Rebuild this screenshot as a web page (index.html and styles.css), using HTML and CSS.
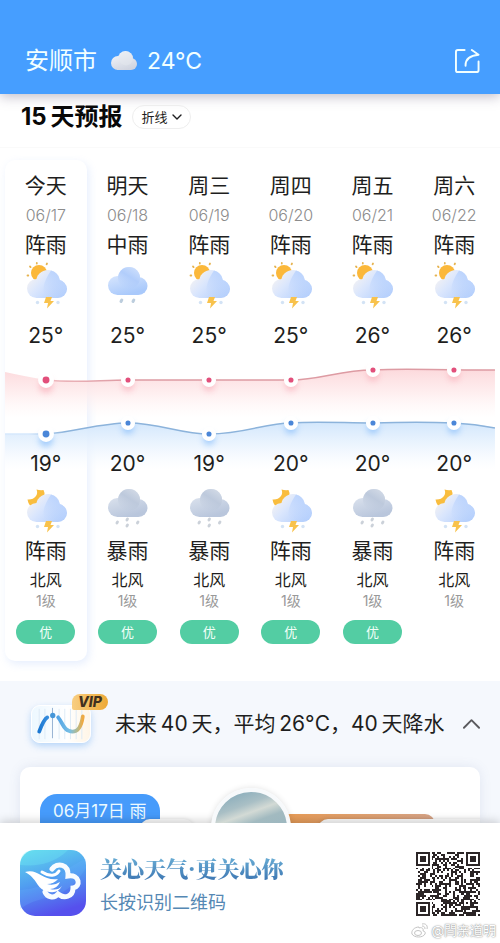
FILE: index.html
```html
<!DOCTYPE html>
<html lang="zh-CN">
<head>
<meta charset="utf-8">
<meta name="viewport" content="width=device-width, initial-scale=1">
<title>安顺市 15天预报</title>
<link rel="stylesheet" href="styles.css">
</head>
<body>
<svg class="defs" aria-hidden="true">
  <defs>
    <linearGradient id="gCloud" gradientUnits="userSpaceOnUse" x1="6" y1="12" x2="34" y2="38"><stop offset="0" stop-color="#f6f3f2"/><stop offset=".4" stop-color="#dae6fd"/><stop offset="1" stop-color="#b3cefc"/></linearGradient>
    <linearGradient id="gLobe" gradientUnits="userSpaceOnUse" x1="38" y1="14" x2="24" y2="36"><stop offset="0" stop-color="#bcd4fd"/><stop offset="1" stop-color="#bcd4fd" stop-opacity="0"/></linearGradient>
    <linearGradient id="gRain" gradientUnits="userSpaceOnUse" x1="10" y1="6" x2="18" y2="34"><stop offset="0" stop-color="#e3edfe"/><stop offset="1" stop-color="#a9c9fb"/></linearGradient>
    <linearGradient id="gRainHump" gradientUnits="userSpaceOnUse" x1="32" y1="4" x2="18" y2="26"><stop offset="0" stop-color="#d2e2fc"/><stop offset=".5" stop-color="#b1cdfb"/><stop offset="1" stop-color="#b1cdfb" stop-opacity="0"/></linearGradient>
    <linearGradient id="gGrey" gradientUnits="userSpaceOnUse" x1="10" y1="4" x2="18" y2="32"><stop offset="0" stop-color="#e2e8f1"/><stop offset="1" stop-color="#b9c6dc"/></linearGradient>
    <linearGradient id="gGreyHump" gradientUnits="userSpaceOnUse" x1="32" y1="2" x2="18" y2="24"><stop offset="0" stop-color="#d6dde8"/><stop offset=".5" stop-color="#bdc9dc"/><stop offset="1" stop-color="#bdc9dc" stop-opacity="0"/></linearGradient>
    <linearGradient id="gRed" x1="0" y1="0" x2="0" y2="1"><stop offset="0" stop-color="#fcd9dc"/><stop offset=".5" stop-color="#feebec" stop-opacity=".8"/><stop offset="1" stop-color="#fff5f5" stop-opacity="0"/></linearGradient>
    <linearGradient id="gBlue" x1="0" y1="0" x2="0" y2="1"><stop offset="0" stop-color="#d3e7fc"/><stop offset=".5" stop-color="#e9f3fe" stop-opacity=".8"/><stop offset="1" stop-color="#f4f9ff" stop-opacity="0"/></linearGradient>
    <linearGradient id="gRedLine" gradientUnits="userSpaceOnUse" x1="0" y1="0" x2="120" y2="0"><stop offset=".3" stop-color="#f0bcc1"/><stop offset="1" stop-color="#dd9ba3"/></linearGradient>
    <linearGradient id="gBlueLine" gradientUnits="userSpaceOnUse" x1="0" y1="0" x2="60" y2="0"><stop offset=".4" stop-color="#d6e8fc"/><stop offset="1" stop-color="#8cb3db"/></linearGradient>
    <filter id="soft" x="-50%" y="-50%" width="200%" height="200%"><feGaussianBlur stdDeviation="3"/></filter>
  </defs>
  <symbol id="thunder" viewBox="0 0 44 48">
    <g fill="url(#gCloud)"><circle cx="12.500" cy="26.500" r="9.500"/><circle cx="24" cy="20" r="12"/><circle cx="34" cy="27" r="9"/><rect x="12" y="22" width="22" height="14"/></g>
    <path d="M27 8.400A12 12 0 0 1 35.500 17.800A9.300 9.300 0 0 1 34 36H22Q15 26 27 8.400Z" fill="url(#gLobe)"/>
    <path d="M22 35h6l-1.500 4h3.500L23 46.500l1-5.500h-4Z" fill="#f8c24c"/>
    <circle cx="13.500" cy="40.500" r="1.700" fill="#d3e3f5"/><circle cx="34" cy="40.500" r="1.700" fill="#d3e3f5"/>
  </symbol>
  <symbol id="day" viewBox="0 0 44 48">
    <circle cx="15" cy="11" r="8" fill="#fbb83a"/>
    <path d="M6 4.500l.6.600M12.800 1v.5M23 1.500l-.4.800M3.500 13.500h.8" stroke="#e6b451" stroke-width="1.800" stroke-linecap="round"/>
    <use href="#thunder"/>
  </symbol>
  <symbol id="night" viewBox="0 0 44 48">
    <path d="M12.500 3.500Q16 4.500 19.500 4Q22 9 18 14Q13 20 6 19.500Q4 17 3.500 13.500Q9 14 12 10Q14 7 12.500 3.500Z" fill="#f9bd3e"/>
    <use href="#thunder"/>
  </symbol>
  <symbol id="rain" viewBox="0 0 44 48">
    <g fill="url(#gRain)"><circle cx="12.500" cy="23.500" r="9.500"/><circle cx="24" cy="16" r="11"/><circle cx="33.500" cy="24" r="9"/><rect x="12" y="20" width="21" height="13"/></g>
    <circle cx="24" cy="16" r="11" fill="url(#gRainHump)"/>
    <path d="M16.800 38l-.8 1.500M28.800 38l-.8 1.500" stroke="#bccddd" stroke-width="3" stroke-linecap="round"/>
  </symbol>
  <symbol id="storm" viewBox="0 0 44 48">
    <g fill="url(#gGrey)"><circle cx="12.500" cy="21.500" r="9.500"/><circle cx="24" cy="14" r="11"/><circle cx="33.500" cy="22" r="9"/><rect x="12" y="18" width="21" height="13"/></g>
    <circle cx="24" cy="14" r="11" fill="url(#gGreyHump)"/>
    <path d="M12.500 36l-.6 1M22.500 33l-.6 1M22.500 39l-.6 1M33 36l-.6 1" stroke="#cbd1d9" stroke-width="2.800" stroke-linecap="round"/>
  </symbol>
</svg>

<header class="topbar">
  <h1 class="city">安顺市</h1>
  <svg class="now-icon" viewBox="0 0 28 22" aria-hidden="true">
    <defs><linearGradient id="nowCloud" gradientUnits="userSpaceOnUse" x1="8" y1="2" x2="14" y2="21"><stop offset="0" stop-color="#f3f5fa"/><stop offset="1" stop-color="#cfd4e0"/></linearGradient></defs>
    <g fill="url(#nowCloud)"><circle cx="15.500" cy="8.500" r="7.500"/><circle cx="21" cy="14" r="6"/><rect x="7" y="10" width="14" height="10"/><circle cx="8" cy="13" r="7"/></g>
    <circle cx="16" cy="8.500" r="7" fill="#e4e7ee" opacity=".5"/>
  </svg>
  <span class="now">24°C</span>
  <button class="share" type="button" aria-label="分享">
    <svg viewBox="0 0 26 26" fill="none" stroke="currentColor" stroke-width="2" stroke-linecap="round" stroke-linejoin="round" aria-hidden="true">
      <path d="M10 1H3Q1 1 1 3V22Q1 24 3 24H22Q24.500 24 24.500 22V13"/><path d="M11 17.500Q10.500 7.500 24.500 6L17.500 1"/>
    </svg>
  </button>
</header>

<main>
  <div class="heading">
    <h2>15&#8201;天预报</h2>
    <button class="mode" type="button">折线
      <svg viewBox="0 0 10 6" fill="none" stroke="currentColor" stroke-width="1.400" stroke-linecap="round" stroke-linejoin="round" aria-hidden="true"><path d="M1 1l4 4 4-4"/></svg>
    </button>
  </div>

  <section class="forecast">
    <div class="today"></div>
    <div class="cell"><span class="day">今天</span><span class="date">06/17</span><span class="cond">阵雨</span><svg class="icon"><use href="#day"/></svg><span class="temp">25°</span></div>
    <div class="cell"><span class="day">明天</span><span class="date">06/18</span><span class="cond">中雨</span><svg class="icon"><use href="#rain"/></svg><span class="temp">25°</span></div>
    <div class="cell"><span class="day">周三</span><span class="date">06/19</span><span class="cond">阵雨</span><svg class="icon"><use href="#day"/></svg><span class="temp">25°</span></div>
    <div class="cell"><span class="day">周四</span><span class="date">06/20</span><span class="cond">阵雨</span><svg class="icon"><use href="#day"/></svg><span class="temp">25°</span></div>
    <div class="cell"><span class="day">周五</span><span class="date">06/21</span><span class="cond">阵雨</span><svg class="icon"><use href="#day"/></svg><span class="temp">26°</span></div>
    <div class="cell"><span class="day">周六</span><span class="date">06/22</span><span class="cond">阵雨</span><svg class="icon"><use href="#day"/></svg><span class="temp">26°</span></div>

    <svg class="chart" viewBox="0 0 490 100" aria-hidden="true">
      <path d="M0 22Q18 26 41 30C70 32 95 30 123 30H286C315 30 335 20 368 20C400 18 420 20 490 20V68H0Z" fill="url(#gRed)"/>
      <path d="M0 84H41C70 82 95 73 123 73C155 73 175 84 204 84C240 84 260 73 286 73H449Q470 73 490 78V120H0Z" fill="url(#gBlue)"/>
      <path d="M41 30C70 33 95 30 123 30H286C315 30 335 20 368 20C400 18 420 20 490 20" fill="none" stroke="url(#gRedLine)" stroke-width="1.500"/>
      <path d="M0 84H41C70 82 95 73 123 73C155 73 175 84 204 84C240 84 260 73 286 73C310 71 340 73 368 73C400 72 425 72 449 73Q470 74 490 78" fill="none" stroke="url(#gBlueLine)" stroke-width="1.500"/>
      <g fill="#f9a9b5" opacity=".65" filter="url(#soft)"><circle cx="41" cy="36" r="7"/><circle cx="123" cy="35" r="6"/><circle cx="204" cy="35" r="6"/><circle cx="286" cy="35" r="6"/><circle cx="368" cy="25" r="6"/><circle cx="449" cy="25" r="6"/></g>
      <g fill="#86bdfb" opacity=".7" filter="url(#soft)"><circle cx="41" cy="90" r="7"/><circle cx="123" cy="78" r="6"/><circle cx="204" cy="89" r="6"/><circle cx="286" cy="78" r="6"/><circle cx="368" cy="78" r="6"/><circle cx="449" cy="78" r="6"/></g>
      <g fill="#e24f7b" stroke="#fff" stroke-width="4.500"><circle cx="41" cy="30" r="5.700"/><circle cx="123" cy="30" r="4.800"/><circle cx="204" cy="30" r="4.800"/><circle cx="286" cy="30" r="4.800"/><circle cx="368" cy="20" r="4.800"/><circle cx="449" cy="20" r="4.800"/></g>
      <g fill="#4a86d8" stroke="#fff" stroke-width="4.500"><circle cx="41" cy="84" r="5.700"/><circle cx="123" cy="73" r="4.800"/><circle cx="204" cy="84" r="4.800"/><circle cx="286" cy="73" r="4.800"/><circle cx="368" cy="73" r="4.800"/><circle cx="449" cy="73" r="4.800"/></g>
    </svg>

    <div class="cell low"><span class="temp">19°</span><svg class="icon"><use href="#night"/></svg><span class="cond">阵雨</span><span class="wind">北风</span><span class="level">1级</span><span class="air">优</span></div>
    <div class="cell low"><span class="temp">20°</span><svg class="icon"><use href="#storm"/></svg><span class="cond">暴雨</span><span class="wind">北风</span><span class="level">1级</span><span class="air">优</span></div>
    <div class="cell low"><span class="temp">19°</span><svg class="icon"><use href="#storm"/></svg><span class="cond">暴雨</span><span class="wind">北风</span><span class="level">1级</span><span class="air">优</span></div>
    <div class="cell low"><span class="temp">20°</span><svg class="icon"><use href="#night"/></svg><span class="cond">阵雨</span><span class="wind">北风</span><span class="level">1级</span><span class="air">优</span></div>
    <div class="cell low"><span class="temp">20°</span><svg class="icon"><use href="#storm"/></svg><span class="cond">暴雨</span><span class="wind">北风</span><span class="level">1级</span><span class="air">优</span></div>
    <div class="cell low"><span class="temp">20°</span><svg class="icon"><use href="#night"/></svg><span class="cond">阵雨</span><span class="wind">北风</span><span class="level">1级</span></div>
  </section>

  <section class="outlook">
    <button class="summary" type="button">
      <span class="trend">
        <svg viewBox="0 0 60 38" fill="none" aria-hidden="true">
          <defs><linearGradient id="wave" x1="0" x2="1" y1="0" y2="0"><stop offset="0" stop-color="#1c78d2"/><stop offset=".35" stop-color="#4a9de6"/><stop offset=".7" stop-color="#78bfe4"/><stop offset=".88" stop-color="#b7b98a"/><stop offset="1" stop-color="#f0a940"/></linearGradient></defs>
          <path d="M7 3v32M13 3v32M28 3v32M34 3v32M40 3v32M46 3v32M52 3v32" stroke="#dceaf5"/>
          <path d="M21 2v32" stroke="#91afd0"/>
          <path d="M7 27C10 19 12 14 15.500 12M27 12C32 18 33 27 42 27C49 27 52 18 53 11" stroke="url(#wave)" stroke-width="4" stroke-linecap="round"/>
          <circle cx="21.300" cy="10" r="2.800" fill="#4596d8"/>
        </svg>
        <span class="vip">VIP</span>
      </span>
      <span class="text">未来&#8201;40&#8201;天，平均&#8201;26°C，40&#8201;天降水</span>
      <svg class="chevron" viewBox="0 0 18 11" fill="none" stroke="currentColor" stroke-width="2" stroke-linecap="round" stroke-linejoin="round" aria-hidden="true"><path d="M1 10l8-8 8 8"/></svg>
    </button>
    <div class="peek">
      <span class="tag">06月17日 雨</span>
      <span class="bump"></span>
      <span class="photo"></span>
      <span class="bar"></span>
      <span class="bump wide"></span>
    </div>
  </section>
</main>

<footer>
  <svg class="logo" viewBox="0 0 66 66" aria-hidden="true">
    <defs><linearGradient id="app" x1=".1" y1="0" x2=".4" y2="1"><stop offset="0" stop-color="#60d6ed"/><stop offset=".5" stop-color="#509df0"/><stop offset="1" stop-color="#5650ed"/></linearGradient></defs>
    <rect width="66" height="66" rx="15" fill="url(#app)"/>
    <path d="M0 40Q22 39 40 25T66 9V18Q50 43 30 47T0 59Z" fill="#70baff" opacity=".2"/>
    <path d="M0 15Q30 18 48 0H15Q0 0 0 15Z" fill="#74edf4" opacity=".3"/>
    <path d="M32 19C37 12 49 14 48 26C60 24 61 37 53 38C53 47 44 49 38 44C34 49 27 47 25 42" fill="none" stroke="#f7fbff" stroke-width="5" stroke-linecap="round"/>
    <path d="M5 22C18 18 22 31 38 29Q34 34 27 34Q34 36 40 32Q37 39 30 39Q38 41 42 36Q37 45 26 41C17 39 17 28 5 22Z" fill="#fff"/>
    <path d="M22 22C30 27 36 26 39 21" fill="none" stroke="#fff" stroke-width="3" stroke-linecap="round"/>
  </svg>
  <div class="slogan"><strong>关心天气·更关心你</strong><span>长按识别二维码</span></div>
  <div class="code">
    <svg id="qr" viewBox="0 0 33 33" shape-rendering="crispEdges" role="img" aria-label="二维码"></svg>
    <span class="mark">
      <svg viewBox="0 0 18 16" fill="none" stroke="#c4c4c4" aria-hidden="true"><path d="M8 5C3 5 0 9 1 12c2 4 11 4 13 0 1-2-1-3-2-3 1-3-2-4-4-3Z"/><ellipse cx="7" cy="11" rx="3.500" ry="2.500"/><path d="M11 2c4-1 6 2 5 5M11 4c2 0 3 1 3 3"/></svg>
      @閆亲道明</span>
  </div>
</footer>
<script src="qr.js"></script>
</body>
</html>
```
FILE: styles.css
```css
* { box-sizing: border-box; }
body {
  margin: 0;
  background: #fff;
  color: #1e1e20;
  font-family: Inter, "Noto Sans CJK SC", sans-serif;
}
h1, h2 { margin: 0; }
button { border: 0; padding: 0; background: none; font: inherit; color: inherit; }
svg { display: block; }
.defs { position: absolute; width: 0; height: 0; }

.topbar {
  display: flex;
  align-items: center;
  height: 94px;
  padding: 28px 20px 0 25px;
  background: #469eff;
  color: #f2ffff;
  box-shadow: 0 2px 12px rgba(60, 50, 90, .35);
}
.city, .now { font-size: 24px; font-weight: 400; line-height: 32px; }
.now { font-size: 23px; }
.now-icon { width: 28px; height: 22px; margin: 0 9px 0 13px; }
.share { margin-left: auto; }
.share svg { width: 25px; height: 25px; }

.heading {
  display: flex;
  align-items: center;
  gap: 10px;
  height: 54px;
  padding: 0 20px 8px 21px;
  border-bottom: 1px solid #fafafa;
}
.heading h2 { font-size: 24px; font-weight: 700; line-height: 32px; color: #080808; }
.mode {
  display: flex;
  align-items: center;
  gap: 5px;
  height: 24px;
  padding: 0 8px;
  border: 1px solid #eee;
  border-radius: 12px;
  font-size: 13px;
}
.mode svg { width: 10px; height: 6px; }

.forecast {
  display: grid;
  grid-template-columns: repeat(6, 1fr);
  grid-template-rows: auto auto auto;
  margin: 12px 5px 20px;
}
.today {
  grid-area: 1 / 1 / 4 / 2;
  border-radius: 10px;
  background: #fff;
  box-shadow: 2px 3px 8px rgba(130, 170, 245, .2);
}
.cell {
  grid-row: 1;
  display: flex;
  flex-direction: column;
  align-items: center;
  padding-top: 10px;
  position: relative;
}
.cell:nth-child(2), .cell:nth-child(9) { grid-column: 1; }
.cell:nth-child(3), .cell:nth-child(10) { grid-column: 2; }
.cell:nth-child(4), .cell:nth-child(11) { grid-column: 3; }
.cell:nth-child(5), .cell:nth-child(12) { grid-column: 4; }
.cell:nth-child(6), .cell:nth-child(13) { grid-column: 5; }
.cell:nth-child(7), .cell:nth-child(14) { grid-column: 6; }
.low { grid-row: 3; padding: 0 0 17px; }
.day { font-size: 21px; line-height: 32px; }
.date { font-size: 16px; line-height: 26px; color: #8c8c8c; font-weight: 300; }
.cond { font-size: 21px; line-height: 34px; }
.icon { width: 44px; height: 48px; }
.temp { font-size: 21px; line-height: 28px; margin-top: 12px; }
.low .temp { margin: 0 0 8px; }
.chart { grid-area: 2 / 1 / 3 / 7; width: 100%; overflow: visible; position: relative; }
.wind { font-size: 16px; line-height: 24px; }
.level { font-size: 14px; line-height: 18px; color: #999; }
.air {
  width: 59px;
  margin-top: 10px;
  border-radius: 12px;
  background: #53cda3;
  color: #f2fff8;
  font-size: 13px;
  line-height: 24px;
  text-align: center;
}

.outlook { background: #f5f8fd; overflow: hidden; }
.summary {
  display: flex;
  align-items: center;
  width: 100%;
  height: 86px;
  padding: 0 20px 0 31px;
  text-align: left;
}
.trend {
  position: relative;
  flex: none;
  width: 60px;
  height: 38px;
  border-radius: 9px;
  background: linear-gradient(90deg, #edf8ff, #fff 60%, #fff5e6);
  border: 1px solid #fff;
  box-shadow: 0 3px 7px rgba(105, 170, 245, .45);
}
.trend svg { width: 58px; height: 36px; }
.vip {
  position: absolute;
  left: 40px;
  top: -12px;
  padding: 0 6px;
  border-radius: 8px 8px 8px 2px;
  background: linear-gradient(90deg, #f8ce82, #eda936);
  font-size: 14px;
  font-weight: 800;
  font-style: italic;
  line-height: 16px;
  color: #3f3020;
}
.summary .text { margin-left: 24px; font-size: 21px; line-height: 28px; white-space: nowrap; }
.chevron { flex: none; width: 17px; height: 11px; margin-left: auto; color: #5a5a5e; }
.peek {
  position: relative;
  height: 56px;
  margin: 0 20px;
  padding: 27px 20px 0;
  border-radius: 10px 10px 0 0;
  background: #fff;
  box-shadow: 0 0 12px rgba(90, 110, 160, .13);
  overflow: hidden;
}
.tag {
  display: inline-block;
  padding: 0 13px;
  border-radius: 17px 17px 0 0;
  background: #469bfb;
  color: #ecfaff;
  font-size: 17px;
  line-height: 34px;
}
.bar { position: absolute; left: 260px; top: 47px; width: 155px; height: 20px; border-radius: 12px; background: linear-gradient(90deg, #e99c55, #d7a487); }
.bump { position: absolute; left: 120px; top: 52px; width: 54px; height: 20px; border-radius: 14px; background: #fafafa; box-shadow: 0 0 4px rgba(0, 0, 0, .12); }
.wide { left: 298px; width: 180px; }
.photo {
  position: absolute;
  z-index: 1;
  left: 191px;
  top: 21px;
  width: 80px;
  height: 80px;
  border: 4px solid #f7f9fb;
  border-radius: 50%;
  background: linear-gradient(160deg, #8fb0bd 10%, #a9bfc5 24%, #d3dad5 34%, #a2bac0 45%, #8caebc);
  box-shadow: 0 0 6px rgba(0, 0, 0, .12);
}

footer {
  position: relative;
  display: flex;
  align-items: flex-start;
  min-height: 120px;
  padding: 27px 20px 0;
  background: #fff;
  box-shadow: 0 -2px 9px rgba(0, 0, 0, .18);
}
.logo { flex: none; width: 66px; height: 66px; }
.slogan { display: flex; flex-direction: column; gap: 4px; margin-left: 14px; padding-top: 2px; }
.slogan strong {
  font-family: "Noto Serif CJK SC", "Noto Sans CJK SC", serif;
  font-size: 22px;
  font-weight: 900;
  line-height: 32px;
  background: linear-gradient(#73b9dc, #376fae);
  -webkit-background-clip: text;
  background-clip: text;
  color: transparent;
}
.slogan span { font-size: 18px; line-height: 30px; color: #5588b4; }
.code { margin-left: auto; width: 64px; padding-top: 2px; }
.code > svg { width: 64px; height: 64px; }
.mark {
  display: flex;
  justify-content: flex-end;
  align-items: center;
  gap: 2px;
  float: right;
  margin: 5px -16px 0 0;
  font-size: 13px;
  line-height: 18px;
  white-space: nowrap;
  color: #fff;
  text-shadow: 0 0 1px #888, 0 0 2px #999;
}
.mark svg { width: 18px; height: 16px; }
```
FILE: qr.js
```js
// Fills the code with 33 x 33 modules and its finder and alignment squares.
const size = 33;
let seed = 20240617;
const next = () => (seed = (seed * 1103515245 + 12345) % 2147483648) / 2147483648;
const ring = (x, y, cx, cy) => Math.max(Math.abs(x - cx), Math.abs(y - cy));
let d = '';
for (let y = 0; y < size; y++) {
  for (let x = 0; x < size; x++) {
    let on = next() < 0.5;
    for (const [cx, cy] of [[3, 3], [29, 3], [3, 29]]) {
      const r = ring(x, y, cx, cy);
      if (r <= 4) on = r < 2 || r === 3;
    }
    const a = ring(x, y, 26, 26);
    if (a <= 2) on = a !== 1;
    if (on) d += `M${x} ${y}h1v1h-1z`;
  }
}
const path = document.createElementNS('http://www.w3.org/2000/svg', 'path');
path.setAttribute('d', d);
path.setAttribute('fill', '#2b2526');
document.getElementById('qr').append(path);
```
